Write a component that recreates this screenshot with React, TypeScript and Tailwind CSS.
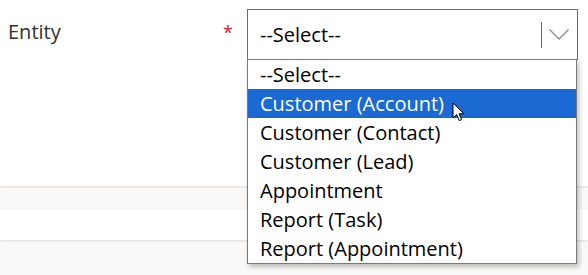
import React from "react";

const options = [
  "--Select--",
  "Customer (Account)",
  "Customer (Contact)",
  "Customer (Lead)",
  "Appointment",
  "Report (Task)",
  "Report (Appointment)",
];

export default function App() {
  return (
    <div
      className="relative w-[588px] h-[275px] overflow-hidden bg-[#faf9f8]"
      style={{ fontFamily: '"Open Sans", "Noto Sans", sans-serif' }}
    >
      {/* top white card */}
      <div className="h-[186px] bg-white shadow-[0_1px_2px_rgba(0,0,0,0.12)] flex items-start">
        <div className="w-[215px] pl-[8px] pt-[19px] text-[20px] leading-[26px] text-[#323130]">
          Entity
        </div>
        <div className="w-[32px] pt-[20px] pl-[8px] text-[18px] leading-[24px] text-[#e0202a]">
          *
        </div>
        <div className="mt-[9px] w-[331px] h-[51px] border border-[#6b6b6b] bg-white flex items-center">
          <div className="flex-1 pl-[12px] text-[20px] text-black leading-[26px]">
            --Select--
          </div>
          <div className="w-px h-[26px] bg-[#6b6b6b]" />
          <div className="w-[35px] flex items-center justify-center pr-[1px]">
            <svg width="20" height="11" viewBox="0 0 20 11">
              <path
                d="M0.5 0.5 L10 10 L19.5 0.5"
                fill="none"
                stroke="#8a8a8a"
                strokeWidth="1.3"
              />
            </svg>
          </div>
        </div>
      </div>
      {/* gray band */}
      <div className="h-[23px]" />
      {/* second white card */}
      <div className="h-[31px] bg-white shadow-[0_1px_2px_rgba(0,0,0,0.12)]" />

      {/* dropdown list */}
      <div className="absolute left-[247px] top-[59px] w-[330px] h-[205px] bg-white border border-[#7a7a7a] shadow-[2px_3px_5px_rgba(0,0,0,0.25)]">
        {options.map((o, i) => (
          <div
            key={o}
            className={
              i === 1
                ? "h-[29px] pl-[12px] flex items-center text-[20px] leading-[26px] bg-[#1b69d3] text-white"
                : "h-[29px] pl-[12px] flex items-center text-[20px] leading-[26px] text-black"
            }
          >
            {o}
          </div>
        ))}
      </div>

      {/* mouse cursor */}
      <svg
        className="absolute left-[452px] top-[102px]"
        width="14"
        height="21"
        viewBox="0 0 14 21"
      >
        <path
          d="M1 1 L1 16 L4.6 12.6 L7.2 18.6 L9.6 17.6 L7.1 11.8 L12 11.8 Z"
          fill="white"
          stroke="black"
          strokeWidth="1"
          strokeLinejoin="miter"
        />
      </svg>
    </div>
  );
}
